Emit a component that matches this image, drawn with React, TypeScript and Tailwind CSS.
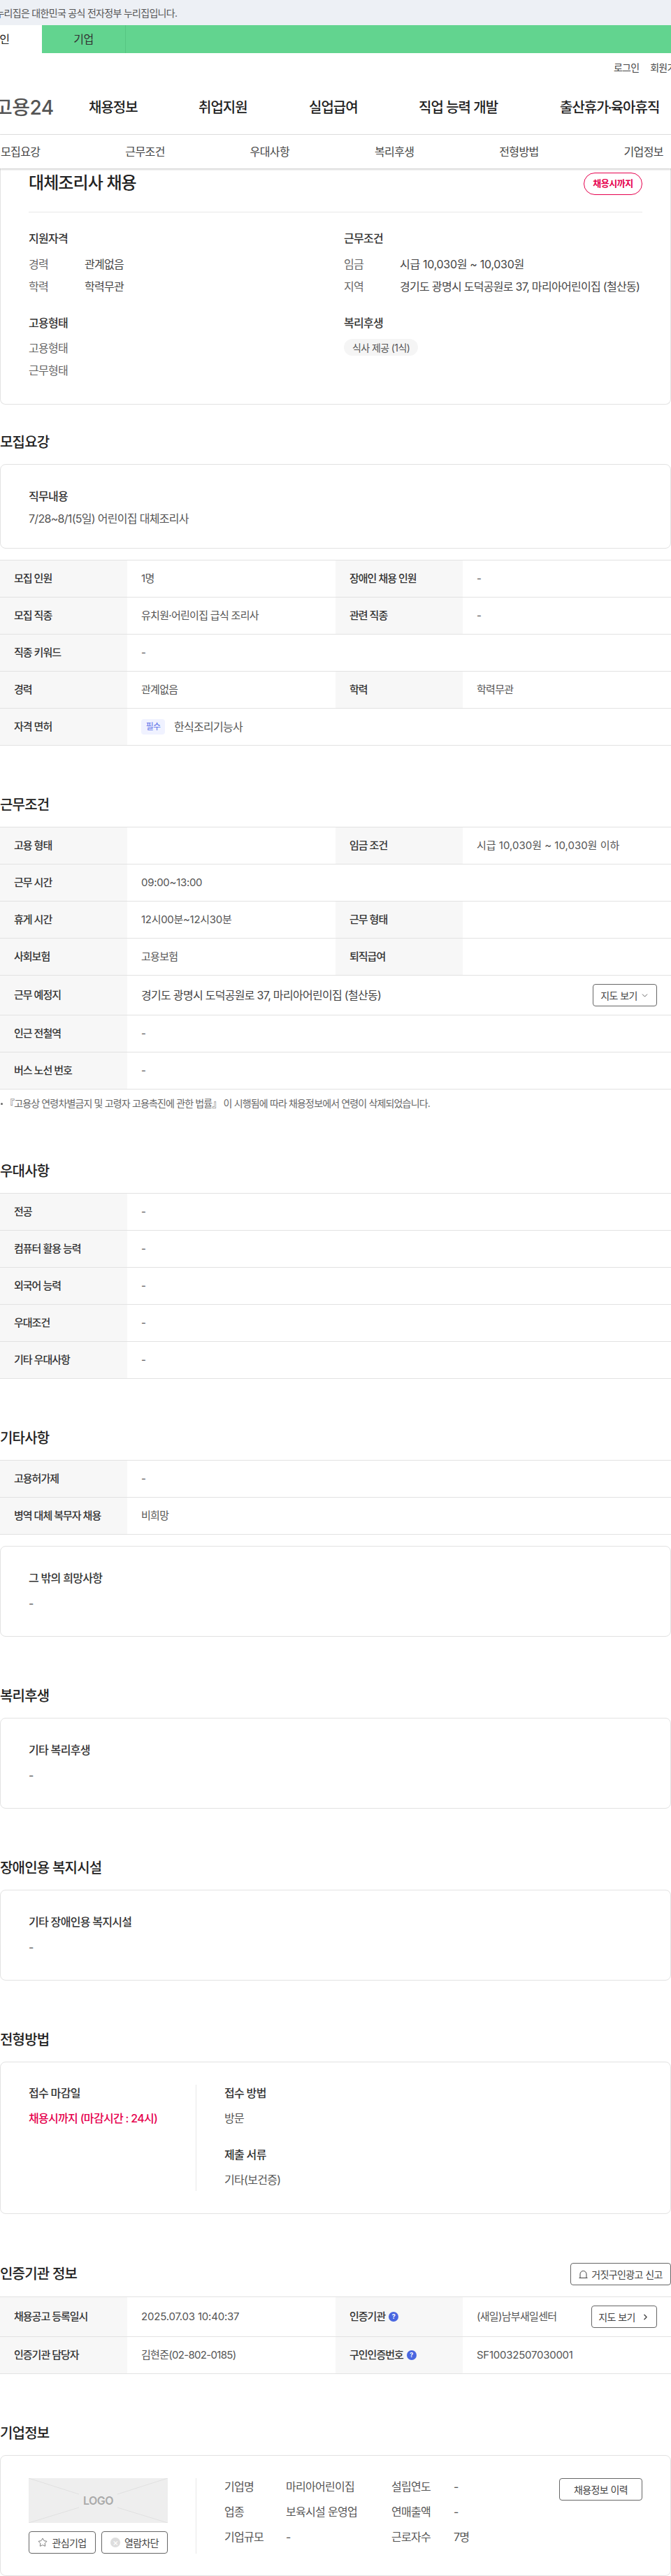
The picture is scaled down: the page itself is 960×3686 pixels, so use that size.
import { ChevronDown, ChevronRight, Star } from "lucide-react";
import type { ReactNode } from "react";

function SectionTitle({ children }: { children: ReactNode }) {
  return (
    <h2 className="h-[30px] text-[20px] leading-[30px] font-medium tracking-[-0.8px] text-[#222]">
      {children}
    </h2>
  );
}

function Label({ children, className = "" }: { children: ReactNode; className?: string }) {
  return (
    <p className={`h-6 text-[16px] leading-6 font-medium tracking-[-0.7px] text-[#333] ${className}`}>
      {children}
    </p>
  );
}

function Value({ children, className = "" }: { children: ReactNode; className?: string }) {
  return (
    <p className={`h-6 text-[16px] leading-6 tracking-[-0.7px] text-[#555] ${className}`}>{children}</p>
  );
}

function Th({ children }: { children: ReactNode }) {
  return (
    <div className="flex w-[182px] shrink-0 items-center gap-[5px] bg-[#f7f7f7] pl-5 text-[15px] font-medium tracking-[-1px] text-[#333]">
      {children}
    </div>
  );
}

function Td({ children, wide }: { children?: ReactNode; wide?: boolean }) {
  return (
    <div
      className={`flex items-center pl-5 text-[15px] tracking-[-0.7px] text-[#555] ${
        wide ? "flex-1" : "w-[298px] shrink-0"
      }`}
    >
      {children}
    </div>
  );
}

function Row({ children, tall }: { children: ReactNode; tall?: boolean }) {
  return (
    <div className={`flex border-b border-[#e2e2e2] ${tall ? "h-[57px]" : "h-[53px]"}`}>{children}</div>
  );
}

function Pair(props: { a: string; b: ReactNode; c: ReactNode; d?: ReactNode }) {
  return (
    <Row>
      <Th>{props.a}</Th>
      <Td>{props.b}</Td>
      <Th>{props.c}</Th>
      <Td wide>{props.d}</Td>
    </Row>
  );
}

function Single({ a, b }: { a: string; b: ReactNode }) {
  return (
    <Row>
      <Th>{a}</Th>
      <Td wide>{b}</Td>
    </Row>
  );
}

function Table({ children }: { children: ReactNode }) {
  return <div className="border-t border-[#e2e2e2]">{children}</div>;
}

function TextCard({ label, value }: { label: string; value: string }) {
  return (
    <div className="rounded-lg border border-[#e2e2e2] px-10 pt-[33px] pb-[35px]">
      <Label>{label}</Label>
      <Value className="mt-3">{value}</Value>
    </div>
  );
}

function Section({ title, children }: { title: string; children: ReactNode }) {
  return (
    <section className="mt-[70px]">
      <div className="mb-4">
        <SectionTitle>{title}</SectionTitle>
      </div>
      {children}
    </section>
  );
}

function InfoRow({ label, value, digits }: { label: string; value: string; digits?: boolean }) {
  return (
    <div className="flex h-6 items-center text-[16px] tracking-[-0.7px]">
      <span className="w-[80px] shrink-0 text-[#666]">{label}</span>
      <span className={digits ? "tracking-[-0.3px] text-[#444]" : "text-[#444]"}>{value}</span>
    </div>
  );
}

function HelpDot() {
  return (
    <span className="flex h-[14px] w-[14px] items-center justify-center rounded-full bg-[#4a67e0] text-[9px] font-bold tracking-normal text-white">
      ?
    </span>
  );
}

function SmallButton({ children, className }: { children: ReactNode; className: string }) {
  return (
    <button
      className={`flex h-8 items-center justify-center rounded border border-[#666] bg-white text-[14px] tracking-[-0.6px] text-[#444] ${className}`}
    >
      {children}
    </button>
  );
}

export default function App() {
  return (
    <div
      className="w-[960px] overflow-hidden bg-white text-[#333]"
      style={{ fontFamily: 'Inter, "Noto Sans CJK KR", sans-serif' }}
    >
      <div className="flex h-9 items-center overflow-hidden bg-[#edf0f5] text-[14px] tracking-[-0.7px] whitespace-nowrap text-[#555]">
        <span className="-ml-[22px]">이 누리집은 대한민국 공식 전자정부 누리집입니다.</span>
      </div>
      <div className="flex h-10 bg-[#62d48f] text-[16px] tracking-[-0.5px]">
        <div className="flex w-[60px] items-center overflow-hidden bg-white text-[#222]">
          <span className="-ml-[15px] whitespace-nowrap">개인</span>
        </div>
        <div className="flex w-[120px] items-center justify-center border-r border-[#57c682] text-[#333]">
          기업
        </div>
      </div>
      <div className="flex h-10 items-center overflow-hidden pl-[878px] text-[14px] tracking-[-0.8px] whitespace-nowrap text-[#444]">
        <span>로그인</span>
        <span className="ml-4">회원가입</span>
      </div>
      <div className="flex h-[77px] items-center overflow-hidden border-b border-[#e8e8e8] text-[20px] font-medium tracking-[-1px] whitespace-nowrap text-[#222]">
        <span className="-ml-[8px] w-[135px] shrink-0 text-[28px] leading-none font-medium tracking-[-0.5px] text-[#555]">
          고용24
        </span>
        <span className="w-[157px] shrink-0">채용정보</span>
        <span className="w-[158px] shrink-0">취업지원</span>
        <span className="w-[157px] shrink-0">실업급여</span>
        <span className="w-[202px] shrink-0">직업 능력 개발</span>
        <span>
          출산휴가<span className="-mx-[1px]">·</span>육아휴직
        </span>
      </div>
      <div className="relative z-10 flex h-12 items-center justify-between bg-white pr-[11px] pl-[1px] text-[16px] tracking-[-0.6px] text-[#444] shadow-[0_1px_3px_rgba(0,0,0,0.25)]">
        <span>모집요강</span>
        <span>근무조건</span>
        <span>우대사항</span>
        <span>복리후생</span>
        <span>전형방법</span>
        <span>기업정보</span>
      </div>

      <div className="rounded-b-lg border border-t-0 border-[#e2e2e2] px-10 pt-[6px] pb-9">
        <div className="flex items-start justify-between border-b border-[#e8e8e8] pb-6">
          <h1 className="text-[24px] leading-[30px] font-medium tracking-[-0.9px] text-[#222]">
            대체조리사 채용
          </h1>
          <span className="flex h-8 w-[84px] items-center justify-center rounded-full border border-[#e6004d] text-[13px] font-bold tracking-[-0.5px] text-[#e6004d]">
            채용시까지
          </span>
        </div>
        <div className="mt-[25px] grid grid-cols-[451px_1fr]">
          <div>
            <Label>지원자격</Label>
            <div className="mt-[13px] flex flex-col gap-2">
              <InfoRow label="경력" value="관계없음" />
              <InfoRow label="학력" value="학력무관" />
            </div>
          </div>
          <div>
            <Label>근무조건</Label>
            <div className="mt-[13px] flex flex-col gap-2">
              <InfoRow label="임금" value="시급 10,030원 ~ 10,030원" digits />
              <InfoRow label="지역" value="경기도 광명시 도덕공원로 37, 마리아어린이집 (철산동)" />
            </div>
          </div>
          <div className="mt-[28px]">
            <Label>고용형태</Label>
            <div className="mt-[12px] flex flex-col gap-2">
              <InfoRow label="고용형태" value="" />
              <InfoRow label="근무형태" value="" />
            </div>
          </div>
          <div className="mt-[28px]">
            <Label>복리후생</Label>
            <span className="mt-[11px] inline-flex h-6 items-center rounded-full bg-[#f5f5f5] px-3 text-[14px] tracking-[-0.6px] text-[#555]">
              식사 제공 (1식)
            </span>
          </div>
        </div>
      </div>

      <section className="mt-[39px]">
        <div className="mb-4">
          <SectionTitle>모집요강</SectionTitle>
        </div>
        <div className="rounded-lg border border-[#e2e2e2] px-10 pt-[33px] pb-[30px]">
          <Label>직무내용</Label>
          <Value className="mt-2">7/28~8/1(5일) 어린이집 대체조리사</Value>
        </div>
        <div className="mt-4">
          <Table>
            <Pair a="모집 인원" b="1명" c="장애인 채용 인원" d="-" />
            <Pair a="모집 직종" b="유치원·어린이집 급식 조리사" c="관련 직종" d="-" />
            <Single a="직종 키워드" b="-" />
            <Pair a="경력" b="관계없음" c="학력" d="학력무관" />
            <Single
              a="자격 면허"
              b={
                <span className="flex items-center gap-[13px]">
                  <span className="flex h-[22px] w-[34px] items-center justify-center rounded bg-[#f0f2ff] text-[12px] text-[#5a6fe8]">
                    필수
                  </span>
                  <span className="text-[16px]">한식조리기능사</span>
                </span>
              }
            />
          </Table>
        </div>
      </section>

      <Section title="근무조건">
        <Table>
          <Pair
            a="고용 형태"
            b=""
            c="임금 조건"
            d={<span className="tracking-normal">시급 10,030원 ~ 10,030원 이하</span>}
          />
          <Single a="근무 시간" b={<span className="tracking-[-0.3px]">09:00~13:00</span>} />
          <Pair
            a="휴게 시간"
            b={<span className="tracking-[-0.3px]">12시00분~12시30분</span>}
            c="근무 형태"
          />
          <Pair a="사회보험" b="고용보험" c="퇴직급여" />
          <Row tall>
            <Th>근무 예정지</Th>
            <div className="flex flex-1 items-center justify-between pr-5 pl-5 text-[16px] tracking-[-0.7px] text-[#444]">
              <span>경기도 광명시 도덕공원로 37, 마리아어린이집 (철산동)</span>
              <SmallButton className="w-[92px] gap-1">
                지도 보기
                <ChevronDown size={13} strokeWidth={1.5} />
              </SmallButton>
            </div>
          </Row>
          <Single a="인근 전철역" b="-" />
          <Single a="버스 노선 번호" b="-" />
        </Table>
        <div className="mt-[10px] flex h-[22px] items-start gap-[4px] text-[14px] leading-5 tracking-[-0.85px] text-[#666]">
          <span className="mt-[9px] h-[3px] w-[3px] shrink-0 translate-x-[1px] rounded-full bg-[#666]" />
          <span>『고용상 연령차별금지 및 고령자 고용촉진에 관한 법률』 이 시행됨에 따라 채용정보에서 연령이 삭제되었습니다.</span>
        </div>
      </Section>

      <Section title="우대사항">
        <Table>
          <Single a="전공" b="-" />
          <Single a="컴퓨터 활용 능력" b="-" />
          <Single a="외국어 능력" b="-" />
          <Single a="우대조건" b="-" />
          <Single a="기타 우대사항" b="-" />
        </Table>
      </Section>

      <Section title="기타사항">
        <Table>
          <Single a="고용허가제" b="-" />
          <Single a="병역 대체 복무자 채용" b="비희망" />
        </Table>
        <div className="mt-4">
          <TextCard label="그 밖의 희망사항" value="-" />
        </div>
      </Section>

      <Section title="복리후생">
        <TextCard label="기타 복리후생" value="-" />
      </Section>

      <Section title="장애인용 복지시설">
        <TextCard label="기타 장애인용 복지시설" value="-" />
      </Section>

      <Section title="전형방법">
        <div className="rounded-lg border border-[#e2e2e2] px-10 py-8">
          <div className="flex h-[152px]">
            <div className="w-[240px] border-r border-[#e8e8e8]">
              <Label>접수 마감일</Label>
              <Value className="mt-3 font-medium text-[#e6004d]">채용시까지 (마감시간 : 24시)</Value>
            </div>
            <div className="pl-10">
              <Label>접수 방법</Label>
              <Value className="mt-3">방문</Value>
              <Label className="mt-7">제출 서류</Label>
              <Value className="mt-3">기타(보건증)</Value>
            </div>
          </div>
        </div>
      </Section>

      <section className="mt-[70px]">
        <div className="mb-4 flex h-8 items-center justify-between">
          <SectionTitle>인증기관 정보</SectionTitle>
          <SmallButton className="w-[144px] gap-[5px]">
            <svg width="13" height="12" viewBox="0 0 13 12" fill="none" stroke="#444" strokeWidth="1">
              <path d="M2 11V6a4.5 4.5 0 0 1 9 0v5M0.5 11.5h12" />
            </svg>
            거짓구인광고 신고
          </SmallButton>
        </div>
        <Table>
          <Row tall>
            <Th>채용공고 등록일시</Th>
            <Td>
              <span className="tracking-[-0.2px]">2025.07.03 10:40:37</span>
            </Td>
            <Th>
              인증기관 <HelpDot />
            </Th>
            <div className="flex flex-1 items-center justify-between pr-5 pl-5 text-[15px] tracking-[-0.7px] text-[#555]">
              <span>(새일)남부새일센터</span>
              <SmallButton className="w-[94px] gap-2">
                지도 보기
                <ChevronRight size={13} strokeWidth={2.5} />
              </SmallButton>
            </div>
          </Row>
          <Pair
            a="인증기관 담당자"
            b="김현준(02-802-0185)"
            c={
              <>
                구인인증번호 <HelpDot />
              </>
            }
            d={<span className="tracking-[-0.25px]">SF10032507030001</span>}
          />
        </Table>
      </section>

      <Section title="기업정보">
        <div className="flex rounded-lg border border-[#e2e2e2] px-10 pt-8 pb-[31px]">
          <div className="w-[240px] shrink-0 border-r border-[#e8e8e8] pr-10">
            <div className="relative flex h-16 w-[199px] items-center justify-center bg-[#eeeeee]">
              <svg className="absolute inset-0" width="199" height="64" viewBox="0 0 199 64" stroke="#e0e0e0">
                <path d="M0 0 72 23M199 0 127 23M0 64 72 42M199 64 127 42" fill="none" />
              </svg>
              <span className="relative text-[16px] font-semibold tracking-[-0.5px] text-[#aaa]">LOGO</span>
            </div>
            <div className="mt-3 flex justify-between">
              <SmallButton className="w-[96px] gap-[6px]">
                <Star size={14} strokeWidth={1.2} />
                관심기업
              </SmallButton>
              <SmallButton className="w-[95px] gap-[6px]">
                <span className="flex h-[14px] w-[14px] items-center justify-center rounded-full bg-[#ddd] text-[13px] leading-none text-white">
                  ×
                </span>
                열람차단
              </SmallButton>
            </div>
          </div>
          <div className="grid h-[108px] flex-1 grid-cols-[88px_151px_89px_1fr] content-start gap-y-3 pl-10 text-[16px] leading-6 tracking-[-0.7px] text-[#555]">
            <span>기업명</span>
            <span>마리아어린이집</span>
            <span>설립연도</span>
            <span>-</span>
            <span>업종</span>
            <span>보육시설 운영업</span>
            <span>연매출액</span>
            <span>-</span>
            <span>기업규모</span>
            <span>-</span>
            <span>근로자수</span>
            <span>7명</span>
          </div>
          <SmallButton className="w-[119px] shrink-0">채용정보 이력</SmallButton>
        </div>
      </Section>
    </div>
  );
}
